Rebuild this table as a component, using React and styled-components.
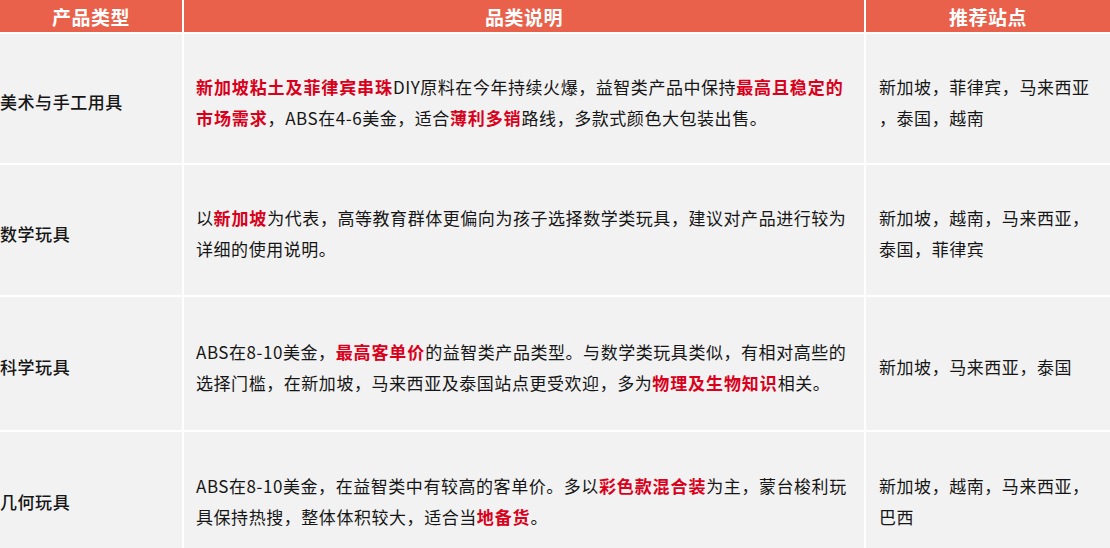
import React from 'react'
import styled, { createGlobalStyle } from 'styled-components'

const GlobalStyle = createGlobalStyle`
  html, body {
    margin: 0;
    padding: 0;
    background: #fff;
  }
  body {
    font-family: "Noto Sans CJK SC", "Noto Sans", sans-serif;
  }
`

const Table = styled.div`
  display: grid;
  grid-template-columns: 182px 680px 1fr;
  grid-auto-rows: auto;
  column-gap: 2px;
  row-gap: 2px;
  width: 1110px;
  background: #fff;
`

const HeadCell = styled.div`
  height: 32px;
  background: #e9614a;
  color: #fff;
  font-size: 19px;
  font-weight: 700;
  letter-spacing: 0.5px;
  display: flex;
  align-items: center;
  justify-content: center;
  line-height: 1;
`

const Cell = styled.div`
  height: ${(p) => p.$h}px;
  box-sizing: border-box;
  background: #f2f2f2;
  color: #161616;
  font-size: 17px;
  font-weight: ${(p) => (p.$strong ? 500 : 400)};
  letter-spacing: 0.55px;
  line-height: 31px;
  display: flex;
  align-items: center;
  padding: 6px 0 0 ${(p) => p.$pl}px;
  white-space: nowrap;
`

const Hi = styled.span`
  color: #d9001b;
  font-weight: 700;
  letter-spacing: 0.9px;
`

const rows = [
  {
    h: 129,
    type: '美术与手工用具',
    desc: [
      [<Hi key="a">新加坡粘土及菲律宾串珠</Hi>, 'DIY原料在今年持续火爆，益智类产品中保持', <Hi key="b">最高且稳定的</Hi>],
      [<Hi key="c">市场需求</Hi>, '，ABS在4-6美金，适合', <Hi key="d">薄利多销</Hi>, '路线，多款式颜色大包装出售。'],
    ],
    sites: ['新加坡，菲律宾，马来西亚', '，泰国，越南'],
  },
  {
    h: 130,
    type: '数学玩具',
    desc: [
      ['以', <Hi key="a">新加坡</Hi>, '为代表，高等教育群体更偏向为孩子选择数学类玩具，建议对产品进行较为'],
      ['详细的使用说明。'],
    ],
    sites: ['新加坡，越南，马来西亚，', '泰国，菲律宾'],
  },
  {
    h: 133,
    type: '科学玩具',
    desc: [
      ['ABS在8-10美金，', <Hi key="a">最高客单价</Hi>, '的益智类产品类型。与数学类玩具类似，有相对高些的'],
      ['选择门槛，在新加坡，马来西亚及泰国站点更受欢迎，多为', <Hi key="b">物理及生物知识</Hi>, '相关。'],
    ],
    sites: ['新加坡，马来西亚，泰国'],
  },
  {
    h: 132,
    type: '几何玩具',
    desc: [
      ['ABS在8-10美金，在益智类中有较高的客单价。多以', <Hi key="a">彩色款混合装</Hi>, '为主，蒙台梭利玩'],
      ['具保持热搜，整体体积较大，适合当', <Hi key="b">地备货</Hi>, '。'],
    ],
    sites: ['新加坡，越南，马来西亚，', '巴西'],
  },
]

const Lines = ({ lines }) => (
  <div>
    {lines.map((line, i) => (
      <div key={i}>{line}</div>
    ))}
  </div>
)

export default function App() {
  return (
    <>
      <GlobalStyle />
      <Table>
        <HeadCell>产品类型</HeadCell>
        <HeadCell>品类说明</HeadCell>
        <HeadCell>推荐站点</HeadCell>
        {rows.map((r) => (
          <React.Fragment key={r.type}>
            <Cell $h={r.h} $pl={0} $strong>{r.type}</Cell>
            <Cell $h={r.h} $pl={12}>
              <Lines lines={r.desc} />
            </Cell>
            <Cell $h={r.h} $pl={13}>
              <Lines lines={r.sites.map((s) => [s])} />
            </Cell>
          </React.Fragment>
        ))}
      </Table>
    </>
  )
}
